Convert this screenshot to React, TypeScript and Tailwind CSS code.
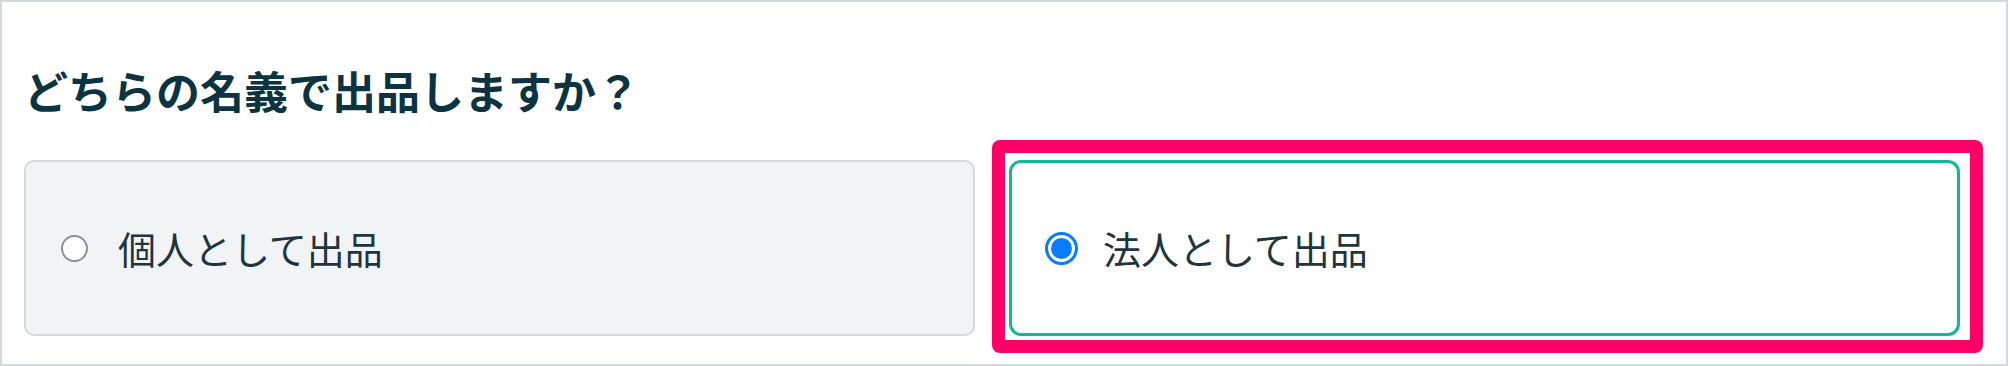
import React from 'react';

const font = { fontFamily: '"Noto Sans CJK JP", "Noto Sans", sans-serif' };

const App: React.FC = () => {
  return (
    <div
      className="relative w-[2008px] h-[366px] bg-white border-2 border-[#d3d8dc] overflow-hidden"
      style={font}
    >
      <div className="pl-[22px] pr-[46px] pt-[58px]">
        <h2 className="text-[44px] leading-[60px] font-bold text-[#0c3340]">
          どちらの名義で出品しますか？
        </h2>

        <div className="mt-[40px] grid grid-cols-2 gap-[34px]">
          {/* 個人 */}
          <label className="h-[176px] flex items-center gap-[30px] pl-[35px] bg-[#f2f3f4] border-2 border-[#d5d9dc] rounded-[10px]">
            <span className="w-[27px] h-[27px] rounded-full border-2 border-[#8f8f8f] bg-white shrink-0" />
            <span className="text-[38px] leading-none text-[#1d3540]">個人として出品</span>
          </label>

          {/* 法人 */}
          <label className="h-[176px] flex items-center gap-[25px] pl-[33px] bg-white border-[3px] border-[#10b99d] rounded-[12px]">
            <span className="w-[33px] h-[33px] rounded-full border-[3px] border-[#0a7cff] bg-white flex items-center justify-center shrink-0">
              <span className="w-[21px] h-[21px] rounded-full bg-[#0a7cff]" />
            </span>
            <span className="text-[38px] leading-none text-[#1d3540]">法人として出品</span>
          </label>
        </div>
      </div>

      {/* annotation box */}
      <div className="absolute left-[990px] top-[138px] w-[991px] h-[213px] border-[13px] border-[#ff0066] rounded-[8px] pointer-events-none" />
    </div>
  );
};

export default App;
